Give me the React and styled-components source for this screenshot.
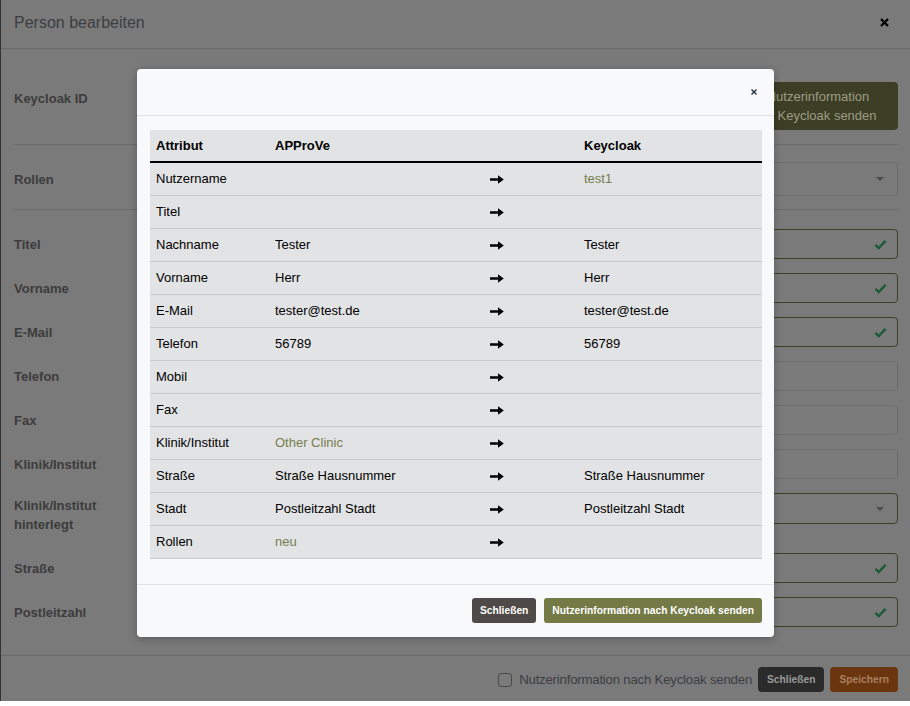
import React from "react";
import styled, { createGlobalStyle } from "styled-components";

const GlobalStyle = createGlobalStyle`
  body {
    margin: 0;
    background: #fff;
    font-family: "Liberation Sans", Arial, sans-serif;
    font-size: 13px;
  }
`;

const Screen = styled.div`
  position: relative;
  height: 701px;
  padding-left: 1px;
  background: #333;
`;

const PageModal = styled.div`
  height: 100%;
  display: flex;
  flex-direction: column;
  background: #7a7a7a;
`;

const PageHeader = styled.div`
  display: flex;
  align-items: center;
  justify-content: space-between;
  padding: 13px 21px 16px 13px;
  border-bottom: 1px solid #6b6b6b;
`;

const PageTitle = styled.div`
  font-size: 16px;
  line-height: 19px;
  color: #3b3e42;
`;

const PageBody = styled.div`
  flex: 1;
  padding: 0 12px 0 13px;
`;

const Section = styled.div`
  display: flex;
  align-items: ${(p) => p.$align || "center"};
  justify-content: space-between;
  padding: ${(p) => p.$pad};
  border-bottom: 1px solid #6b6b6b;
`;

const Label = styled.div`
  font-weight: bold;
  font-size: 13px;
  line-height: 19px;
  color: #3c3c3c;
  padding: ${(p) => p.$pad || "0"};
`;

const DimButton = styled.div`
  width: 160px;
  padding: 5px 10px;
  box-sizing: border-box;
  border-radius: 4px;
  background: ${(p) => p.$bg};
  color: ${(p) => p.$fg};
  font-size: ${(p) => (p.$small ? "10.25px" : "13px")};
  font-weight: ${(p) => (p.$small ? "bold" : "normal")};
  line-height: 19px;
  text-align: center;
  ${(p) => p.$small && "width: auto; padding: 6px 9px; line-height: 13px;"}
`;

const FormGrid = styled.div`
  display: grid;
  grid-template-columns: 200px 1fr;
  row-gap: 14px;
  align-items: center;
  padding-top: 19px;
`;

const Field = styled.div`
  position: relative;
  height: ${(p) => p.$h || 30}px;
  box-sizing: border-box;
  border: 1px solid ${(p) => (p.$valid ? "#3b4027" : "#6d6d6d")};
  border-radius: 4px;
  align-self: ${(p) => p.$self || "center"};
  display: flex;
  align-items: center;
  justify-content: flex-end;
  padding-right: 10px;
`;

const Caret = styled.span`
  width: 0;
  height: 0;
  margin-right: 3px;
  border-left: 4px solid transparent;
  border-right: 4px solid transparent;
  border-top: 4px solid #4d4d4d;
`;

const PageFooter = styled.div`
  display: flex;
  align-items: center;
  justify-content: flex-end;
  gap: 6px;
  padding: 11px 12px 9px;
  border-top: 1px solid #6b6b6b;
`;

const CheckLabel = styled.label`
  display: flex;
  align-items: center;
  gap: 7px;
  font-size: 13.2px;
  color: #3b3e42;
  letter-spacing: -0.2px;
`;

const CheckBox = styled.span`
  width: 12px;
  height: 12px;
  border: 1px solid #4a4a4a;
  border-radius: 3px;
`;

const Backdrop = styled.div`
  position: absolute;
  top: 0;
  left: 0;
  right: 0;
  display: flex;
  justify-content: center;
  padding: 69px 0 0 1px;
`;

const Dialog = styled.div`
  width: 637px;
  background: #f8f9fa;
  border-radius: 4px;
  box-shadow: 0 2px 8px rgba(0, 0, 0, 0.25);
`;

const DialogHeader = styled.div`
  height: 46px;
  display: flex;
  align-items: center;
  justify-content: flex-end;
  padding-right: 17px;
  border-bottom: 1px solid #dee2e6;
`;

const DialogBody = styled.div`
  padding: 14px 12px 25px 13px;
`;

const Table = styled.table`
  width: 100%;
  border-collapse: collapse;
  background: #e2e3e5;
  color: #000;
  font-size: 13px;
  table-layout: fixed;
`;

const Th = styled.th`
  text-align: left;
  padding: 8px 6px;
  line-height: 15px;
  border-bottom: 2px solid #000;
`;

const Td = styled.td`
  padding: 8px 6px;
  line-height: 16px;
  border-bottom: 1px solid #c8c9cc;
  color: ${(p) => (p.$muted ? "#767e4e" : "#000")};
`;

const DialogFooter = styled.div`
  display: flex;
  justify-content: flex-end;
  gap: 8px;
  padding: 13px 12px 14px;
  border-top: 1px solid #dee2e6;
`;

const Button = styled.button`
  border: none;
  border-radius: 3px;
  padding: 6px 8px;
  font-family: inherit;
  font-size: 10.25px;
  font-weight: bold;
  line-height: 13px;
  color: #fff;
  background: ${(p) => (p.$primary ? "#737a45" : "#4f4a47")};
`;

const Check = () => (
  <svg width="13" height="11" viewBox="0 0 13 11">
    <path d="M1.5 5.8l3.3 3.3L11.6 1.8" fill="none" stroke="#1c5a37" strokeWidth="2.4" />
  </svg>
);

const Arrow = () => (
  <svg width="14" height="9" viewBox="0 0 14 9" style={{ verticalAlign: "middle" }}>
    <path d="M0 3.2h8V0.3L13.8 4.5 8 8.7V5.8H0z" fill="#000" />
  </svg>
);

const rows = [
  ["Nutzername", "", "test1", true],
  ["Titel", "", ""],
  ["Nachname", "Tester", "Tester"],
  ["Vorname", "Herr", "Herr"],
  ["E-Mail", "tester@test.de", "tester@test.de"],
  ["Telefon", "56789", "56789"],
  ["Mobil", "", ""],
  ["Fax", "", ""],
  ["Klinik/Institut", "Other Clinic", "", false, true],
  ["Straße", "Straße Hausnummer", "Straße Hausnummer"],
  ["Stadt", "Postleitzahl Stadt", "Postleitzahl Stadt"],
  ["Rollen", "neu", "", false, true],
];

const fields = [
  ["Titel", true],
  ["Vorname", true],
  ["E-Mail", true],
  ["Telefon", false],
  ["Fax", false],
  ["Klinik/Institut", false],
];

export default function App() {
  return (
    <>
      <GlobalStyle />
      <Screen>
        <PageModal>
          <PageHeader>
            <PageTitle>Person bearbeiten</PageTitle>
            <svg width="9" height="9" viewBox="0 0 9 9">
              <path d="M1 1l7 7M8 1L1 8" stroke="#000" strokeWidth="2.3" />
            </svg>
          </PageHeader>
          <PageBody>
            <Section $pad="33px 0 14px" $align="flex-start">
              <Label $pad="7px 0 0">Keycloak ID</Label>
              <DimButton $bg="#3c3e25" $fg="#9d9c84">
                Nutzerinformation
                <br />
                an Keycloak senden
              </DimButton>
            </Section>
            <Section $pad="17px 0 13px">
              <Label>Rollen</Label>
              <Field $h={34} style={{ width: 690 }}>
                <Caret />
              </Field>
            </Section>
            <FormGrid>
              {fields.map(([name, valid]) => (
                <React.Fragment key={name}>
                  <Label>{name}</Label>
                  <Field $valid={valid}>{valid && <Check />}</Field>
                </React.Fragment>
              ))}
              <Label $pad="3px 0 5px">
                Klinik/Institut
                <br />
                hinterlegt
              </Label>
              <Field $valid $h={31} $self="start">
                <Caret />
              </Field>
              <Label>Straße</Label>
              <Field $valid>
                <Check />
              </Field>
              <Label>Postleitzahl</Label>
              <Field $valid>
                <Check />
              </Field>
            </FormGrid>
          </PageBody>
          <PageFooter>
            <CheckLabel>
              <CheckBox />
              Nutzerinformation nach Keycloak senden
            </CheckLabel>
            <DimButton $small $bg="#2b2b2b" $fg="#9a9a9a">
              Schließen
            </DimButton>
            <DimButton $small $bg="#6b3510" $fg="#a8805e">
              Speichern
            </DimButton>
          </PageFooter>
        </PageModal>

        <Backdrop>
          <Dialog>
            <DialogHeader>
              <svg width="6" height="6" viewBox="0 0 6 6">
                <path d="M0.5 0.5l5 5M5.5 0.5l-5 5" stroke="#1d2b3a" strokeWidth="1.3" />
              </svg>
            </DialogHeader>
            <DialogBody>
              <Table>
                <colgroup>
                  <col style={{ width: 119 }} />
                  <col style={{ width: 215 }} />
                  <col style={{ width: 94 }} />
                  <col />
                </colgroup>
                <thead>
                  <tr>
                    <Th>Attribut</Th>
                    <Th>APProVe</Th>
                    <Th />
                    <Th>Keycloak</Th>
                  </tr>
                </thead>
                <tbody>
                  {rows.map(([attr, approve, keycloak, kcMuted, apMuted]) => (
                    <tr key={attr}>
                      <Td>{attr}</Td>
                      <Td $muted={apMuted}>{approve}</Td>
                      <Td>
                        <Arrow />
                      </Td>
                      <Td $muted={kcMuted}>{keycloak}</Td>
                    </tr>
                  ))}
                </tbody>
              </Table>
            </DialogBody>
            <DialogFooter>
              <Button>Schließen</Button>
              <Button $primary>Nutzerinformation nach Keycloak senden</Button>
            </DialogFooter>
          </Dialog>
        </Backdrop>
      </Screen>
    </>
  );
}
